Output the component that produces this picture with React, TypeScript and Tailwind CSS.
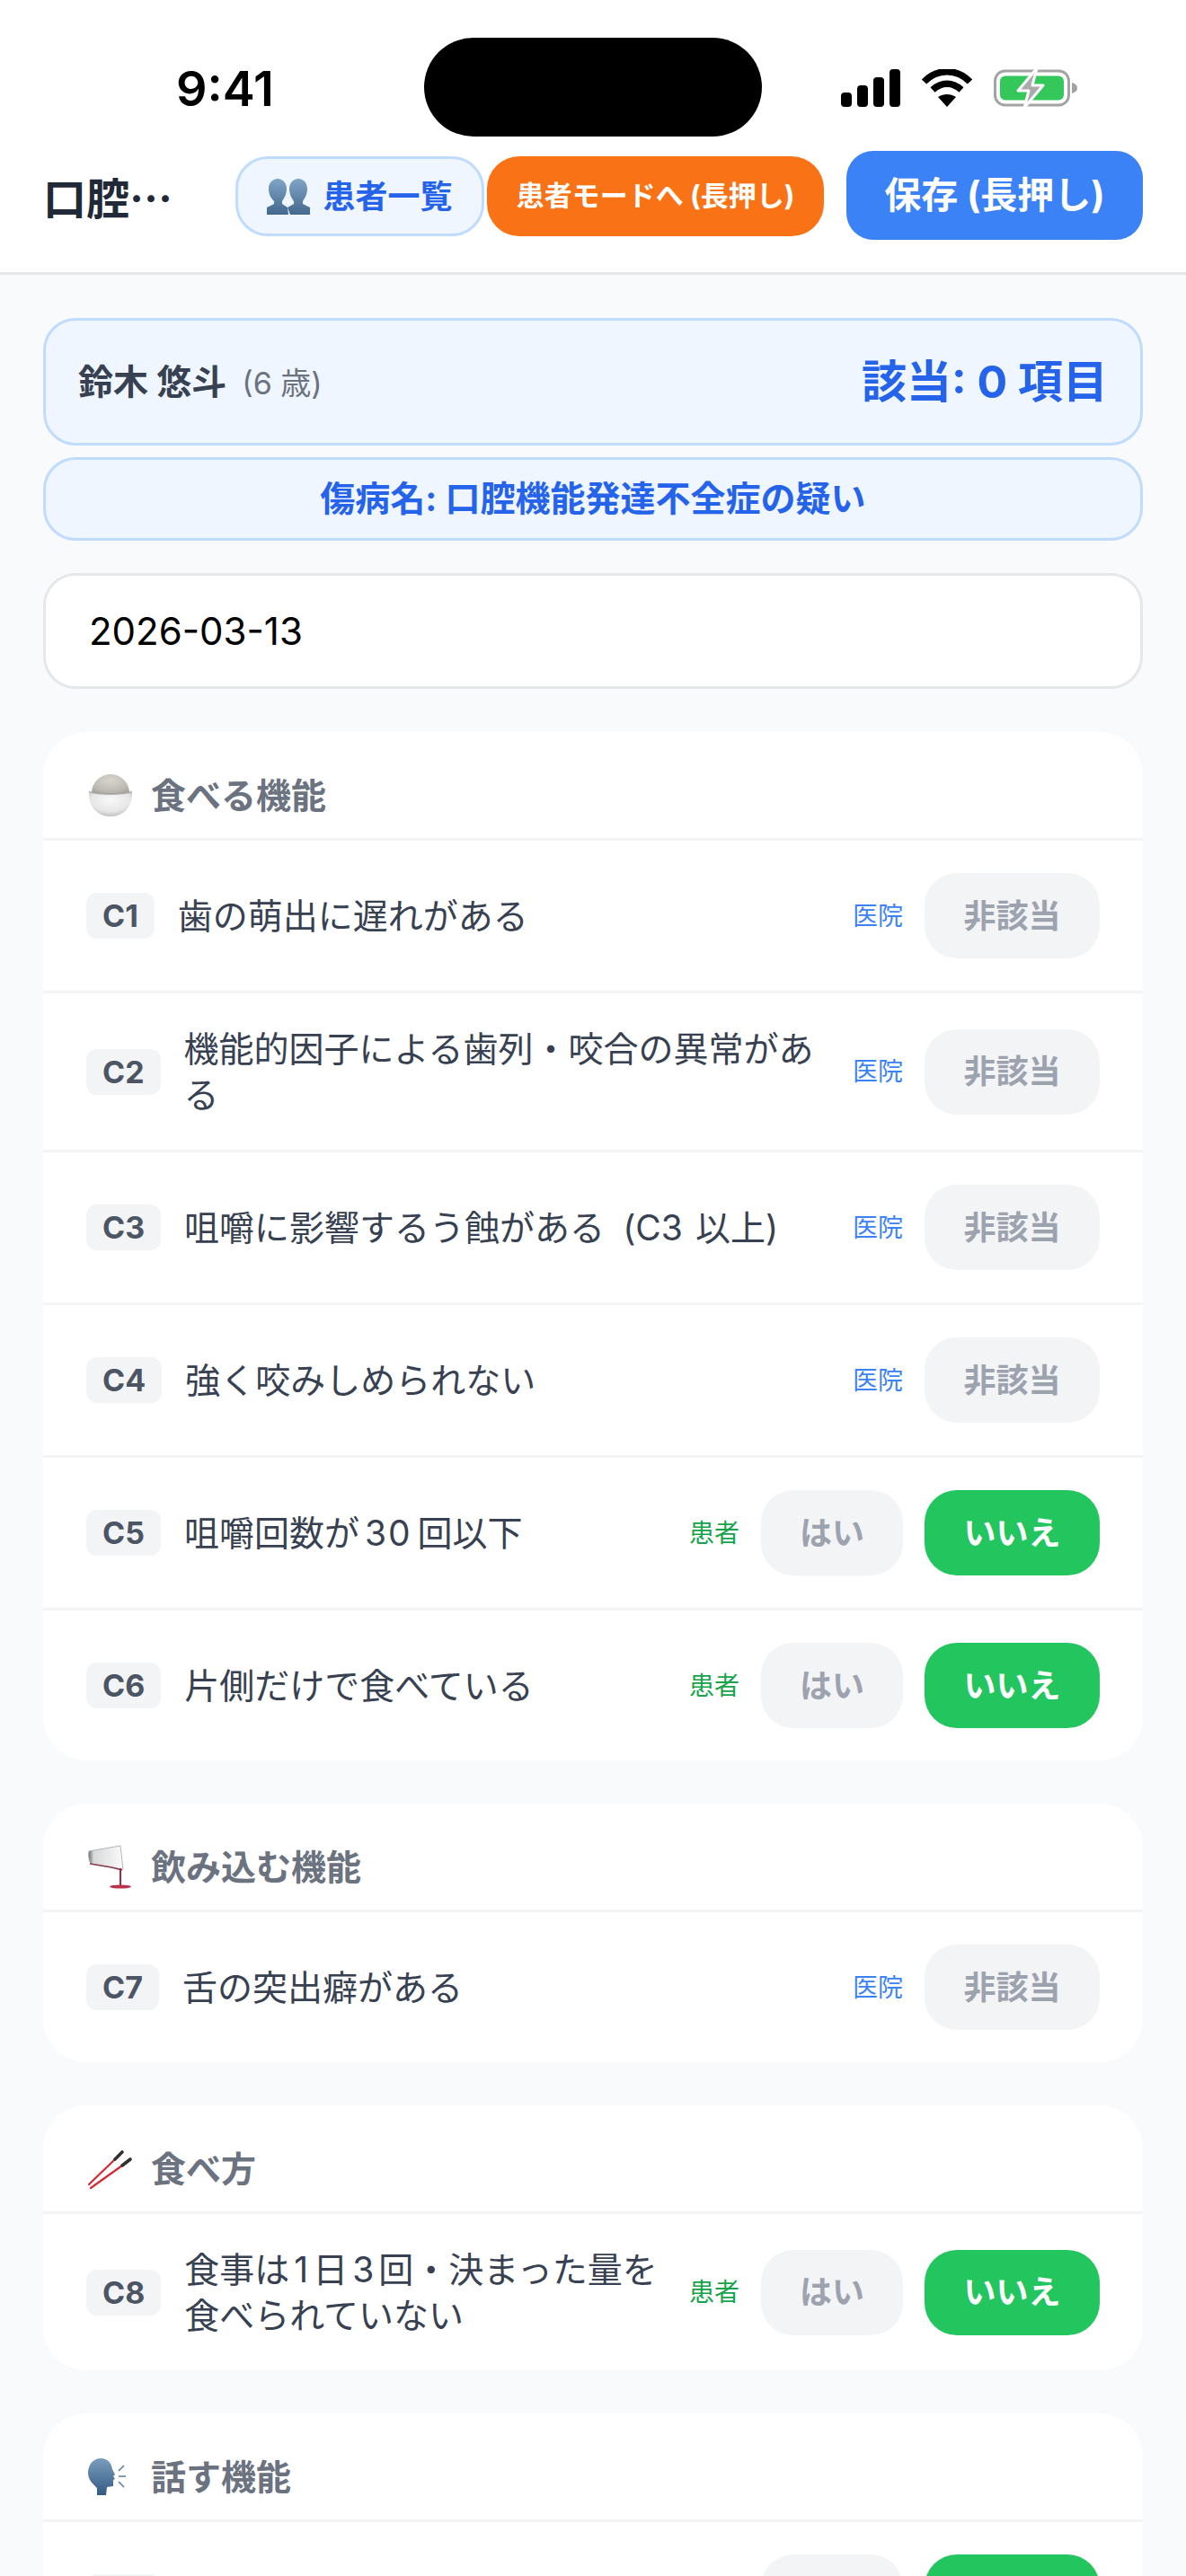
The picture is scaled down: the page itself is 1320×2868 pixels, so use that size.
import React from "react";

type Row = { code: string; text: React.ReactNode; kind: "doc" | "pat" };

const Rice = () => (
  <svg width="50" height="48" viewBox="0 0 50 48" className="shrink-0">
    <defs>
      <radialGradient id="rice" cx="0.5" cy="0.3" r="0.75">
        <stop offset="0" stopColor="#d8d5cf" />
        <stop offset="0.7" stopColor="#bcb9b2" />
        <stop offset="1" stopColor="#a09d97" />
      </radialGradient>
      <radialGradient id="bowl" cx="0.5" cy="0.35" r="0.7">
        <stop offset="0" stopColor="#f8f8f8" />
        <stop offset="0.65" stopColor="#e6e6e6" />
        <stop offset="1" stopColor="#b4b4b4" />
      </radialGradient>
    </defs>
    <path d="M4 21C4 9 14 0 25 0s21 9 21 21c-4 3-38 3-42 0z" fill="url(#rice)" />
    <path d="M1 19c7 4 41 4 48 0 1 15-8 28-24 28S0 34 1 19z" fill="url(#bowl)" />
    <path d="M1 18.5c7 4 41 4 48 0v1.6c-8 4-40 4-48 0z" fill="#8f8f8c" opacity="0.6" />
  </svg>
);

const Pour = () => (
  <svg width="50" height="50" viewBox="0 0 50 50" className="shrink-0">
    <defs>
      <linearGradient id="glass" x1="0" y1="0" x2="1" y2="0">
        <stop offset="0" stopColor="#6d7073" />
        <stop offset="0.15" stopColor="#d7d9da" />
        <stop offset="1" stopColor="#fbfbfb" />
      </linearGradient>
    </defs>
    <path d="M1 7 36 1l3 26-13-2-23-4C1 18 0 11 1 7z" fill="url(#glass)" stroke="#9ea3a8" strokeWidth="0.8" />
    <path d="M2 21l24 4 12 3" fill="none" stroke="#8c3a4a" strokeWidth="1.4" />
    <path d="M35 26h2v20h-2z" fill="#a52a42" />
    <ellipse cx="36" cy="46.5" rx="12" ry="2" fill="#b8324c" />
  </svg>
);

const Sticks = () => (
  <svg width="50" height="46" viewBox="0 0 50 46" className="shrink-0">
    <path d="M1 40 30 12" stroke="#d12b34" strokeWidth="2.2" strokeLinecap="round" />
    <path d="M3 44 38 19" stroke="#d12b34" strokeWidth="2.2" strokeLinecap="round" />
    <path d="M30 12l8-8" stroke="#33302f" strokeWidth="3.6" strokeLinecap="round" />
    <path d="M38 19l9-7" stroke="#33302f" strokeWidth="3.6" strokeLinecap="round" />
  </svg>
);

const Head = () => (
  <svg width="50" height="42" viewBox="0 0 50 42" className="shrink-0">
    <defs>
      <linearGradient id="hd" x1="0" y1="0" x2="0" y2="1">
        <stop offset="0" stopColor="#7b9dbd" />
        <stop offset="1" stopColor="#345a82" />
      </linearGradient>
    </defs>
    <path d="M14 0C5 0 0 8 0 16c0 8 5 12 10 17v8h10l1-9 7-1 0-7 2-1-2-3 2-2-3-6C26 5 22 0 14 0z" fill="url(#hd)" />
    <path d="M34 14l6-6M34 20h8M34 26l6 6" stroke="#5a7fa3" strokeWidth="1.6" />
  </svg>
);

const People = () => (
  <svg width="48" height="40" viewBox="0 0 48 40" className="shrink-0">
    <defs>
      <linearGradient id="pp" x1="0" y1="0" x2="0" y2="1">
        <stop offset="0" stopColor="#80a5c5" />
        <stop offset="1" stopColor="#44688e" />
      </linearGradient>
    </defs>
    <path d="M12 0c6 0 10 5 10 11 0 7-3 11-5 14v3l6 4 1 8H0v-8l8-4v-3C5 22 2 18 2 11 2 5 6 0 12 0z" fill="url(#pp)" />
    <path d="M35 0c6 0 10 5 10 11 0 7-3 11-5 14v3l8 4v8H26l-3-8 7-4v-3c-2-3-5-7-5-14 0-6 4-11 10-11z" fill="url(#pp)" />
  </svg>
);

const StatusIcons = () => (
  <div className="flex items-center gap-[23px]">
    <svg width="66" height="42" viewBox="0 0 66 42">
      <rect x="0" y="26" width="12" height="16" rx="4" fill="#000" />
      <rect x="18" y="18" width="12" height="24" rx="4" fill="#000" />
      <rect x="36" y="9" width="12" height="33" rx="4" fill="#000" />
      <rect x="54" y="0" width="12" height="42" rx="4" fill="#000" />
    </svg>
    <svg width="58" height="42" viewBox="0 0 58 42">
      <path d="M3.5 14C18-1 40-1 54.5 14" fill="none" stroke="#000" strokeWidth="7.5" />
      <path d="M13 23c10-9 22-9 32 0" fill="none" stroke="#000" strokeWidth="7.5" />
      <path d="M29 42 19 31c6-4 14-4 20 0z" fill="#000" />
    </svg>
    <svg width="94" height="44" viewBox="0 0 94 44">
      <rect x="1.5" y="3" width="82" height="38" rx="11" fill="none" stroke="#a3a3a3" strokeWidth="3" />
      <rect x="7" y="8.5" width="71" height="27" rx="6" fill="#34c759" />
      <path d="M87 16c4 1 6 3 6 6s-2 5-6 6z" fill="#a3a3a3" />
      <path d="M48 0 27 25h12l-5 19 21-25H43z" fill="#ababab" stroke="#fff" strokeWidth="3" strokeLinejoin="round" />
    </svg>
  </div>
);

function ItemRow({ row, last }: { row: Row; last: boolean }) {
  return (
    <div className={`flex items-center gap-[26px] px-[48px] py-[36px] ${last ? "" : "border-b-[3px] border-[#f3f4f6]"}`}>
      <span className="shrink-0 rounded-[12px] bg-[#f3f4f6] px-[18px] text-[34px] leading-[51px] font-bold text-[#4b5563]">
        {row.code}
      </span>
      <span className="min-w-0 flex-1 text-[39px] leading-[51px] text-[#374151]">{row.text}</span>
      {row.kind === "doc" ? (
        <>
          <span className="shrink-0 text-[28px] text-[#3b82f6]">医院</span>
          <span className="-ml-[2px] flex h-[95px] w-[195px] shrink-0 items-center justify-center rounded-[36px] bg-[#f3f4f6] text-[36px] font-bold text-[#9ca3af]">
            非該当
          </span>
        </>
      ) : (
        <>
          <span className="shrink-0 text-[28px] text-[#16a34a]">患者</span>
          <span className="-ml-[2px] flex h-[95px] w-[158px] shrink-0 items-center justify-center rounded-[36px] bg-[#f3f4f6] text-[36px] font-bold text-[#9ca3af]">
            はい
          </span>
          <span className="-ml-[2px] flex h-[95px] w-[195px] shrink-0 items-center justify-center rounded-[36px] bg-[#22c55e] text-[36px] font-bold text-white">
            いいえ
          </span>
        </>
      )}
    </div>
  );
}

function Section({ icon, title, rows }: { icon: React.ReactNode; title: string; rows: Row[] }) {
  return (
    <section className="mb-[48px] rounded-[48px] bg-white">
      <div className="flex h-[121px] items-center gap-[20px] border-b-[3px] border-[#f3f4f6] pl-[50px] pt-[24px] text-[39px] font-bold text-[#6b7280]">
        <span className="flex w-[50px] justify-center">{icon}</span>
        <span>{title}</span>
      </div>
      {rows.map((r, i) => (
        <ItemRow key={r.code} row={r} last={i === rows.length - 1} />
      ))}
    </section>
  );
}

export default function App() {
  return (
    <div className="h-[2868px] w-[1320px] overflow-hidden bg-[#f9fafb] font-[Inter,'Noto_Sans_CJK_JP',sans-serif]">
      <header className="border-b-[3px] border-[#e5e7eb] bg-white">
        <div className="flex h-[168px] items-center justify-between pl-[196px] pr-[120px] pt-[28px]">
          <span className="text-[54px] font-semibold text-black">9:41</span>
          <div className="absolute left-[472px] top-[42px] h-[110px] w-[376px] rounded-[55px] bg-black" />
          <StatusIcons />
        </div>
        <div className="flex h-[135px] items-start pl-[48px] pr-[48px]">
          <h1 className="mt-[24px] w-[148px] truncate font-['Noto_Sans_CJK_JP'] text-[48px] leading-[52px] font-bold text-[#1f2937]">
            口腔機能発達不全症
          </h1>
          <div className="ml-[66px] mt-[6px] flex items-center gap-[3px]">
            <button className="flex h-[89px] w-[277px] items-center justify-center gap-[14px] rounded-[36px] border-[3px] border-[#bfdbfe] bg-[#eff6ff] text-[36px] font-bold text-[#2563eb]">
              <People />
              患者一覧
            </button>
            <button className="flex h-[89px] w-[375px] items-center justify-center rounded-[36px] bg-[#f97316] text-[31px] font-bold text-white">
              患者モードへ (長押し)
            </button>
          </div>
          <button className="ml-[25px] flex h-[99px] w-[330px] items-center justify-center rounded-[30px] bg-[#3b82f6] text-[41px] font-bold text-white">
            保存 (長押し)
          </button>
        </div>
      </header>

      <main className="px-[48px] pt-[48px]">
        <div className="flex h-[142px] items-center justify-between rounded-[36px] border-[3px] border-[#bfdbfe] bg-[#eff6ff] px-[36px]">
          <div className="flex items-baseline gap-[17px]">
            <span className="text-[39px] font-bold text-[#374151]">鈴木 悠斗</span>
            <span className="text-[34px] text-[#6b7280]">(6 歳)</span>
          </div>
          <span className="text-[50px] font-bold text-[#2563eb]">該当: 0 項目</span>
        </div>
        <div className="mt-[13px] flex h-[93px] items-center justify-center rounded-[36px] border-[3px] border-[#bfdbfe] bg-[#eff6ff] text-[39px] font-bold text-[#2563eb]">
          傷病名: 口腔機能発達不全症の疑い
        </div>
        <div className="mb-[48px] mt-[36px] flex h-[129px] items-center rounded-[36px] border-[3px] border-[#e5e7eb] bg-white px-[48px] text-[42px] text-black">
          2026-03-13
        </div>

        <Section
          icon={<Rice />}
          title="食べる機能"
          rows={[
            { code: "C1", text: "歯の萌出に遅れがある", kind: "doc" },
            { code: "C2", text: "機能的因子による歯列・咬合の異常がある", kind: "doc" },
            {
              code: "C3",
              text: (
                <>
                  咀嚼に影響するう蝕がある
                  <span className="ml-[20px]">(C3</span>
                  <span className="ml-[14px]">以上)</span>
                </>
              ),
              kind: "doc",
            },
            { code: "C4", text: "強く咬みしめられない", kind: "doc" },
            {
              code: "C5",
              text: (
                <>
                  咀嚼回数が<span className="mx-[6px] tracking-[2px]">30</span>回以下
                </>
              ),
              kind: "pat",
            },
            { code: "C6", text: "片側だけで食べている", kind: "pat" },
          ]}
        />
        <Section icon={<Pour />} title="飲み込む機能" rows={[{ code: "C7", text: "舌の突出癖がある", kind: "doc" }]} />
        <Section
          icon={<Sticks />}
          title="食べ方"
          rows={[
            {
              code: "C8",
              text: (
                <>
                  食事は<span className="mx-[5px]">1</span>日<span className="mx-[5px]">3</span>回・決まった量を食べられていない
                </>
              ),
              kind: "pat",
            },
          ]}
        />
        <Section icon={<Head />} title="話す機能" rows={[{ code: "C9", text: "", kind: "pat" }]} />
      </main>
    </div>
  );
}
